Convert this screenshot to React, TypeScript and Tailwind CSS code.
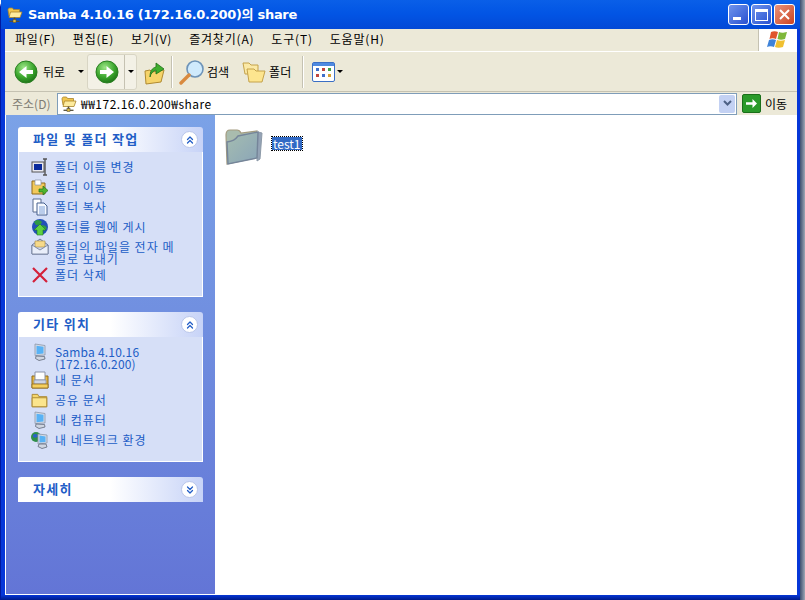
import React from 'react';
import { ChevronsUp, ChevronsDown } from 'lucide-react';

const kr = '"Noto Sans CJK KR", "Liberation Sans", sans-serif';

const FolderIcon = ({ size = 16 }: { size?: number }) => (
  <svg width={size} height={size} viewBox="0 0 16 16" className="shrink-0">
    <path d="M1 3h5l1 2h7v9H1z" fill="#f5d76e" stroke="#a8842c" strokeWidth="0.8" />
    <path d="M1 6h13v8H1z" fill="#fbe58d" stroke="#a8842c" strokeWidth="0.8" />
  </svg>
);

const SambaIcon = ({ size = 16 }: { size?: number }) => (
  <svg width={size} height={size} viewBox="0 0 16 16" className="shrink-0">
    <path d="M1 3c0-1 .5-2 1.500-2h3l1 1.500h6V9H2z" fill="#f0c64e" stroke="#a8842c" strokeWidth="0.8" />
    <path d="M3.500 5H15l-2 5.500H2z" fill="#fdeb9e" stroke="#a8842c" strokeWidth="0.8" />
    <path d="M7.500 10.500V13" stroke="#55503a" strokeWidth="1.600" />
    <path d="M2.500 14.300h10" stroke="#55503a" strokeWidth="1.300" />
    <rect x="6" y="12.500" width="3" height="3" fill="#e0b93c" stroke="#55503a" strokeWidth="0.6" />
  </svg>
);

const ComputerIcon = () => (
  <svg width="18" height="18" viewBox="0 0 18 18" className="shrink-0">
    <path d="M4 1l10 1.500v9.500L4 12.500z" fill="#d5dbe6" stroke="#8a95a8" strokeWidth="0.8" />
    <path d="M5.500 2.800l7 1v6.700l-7 .7z" fill="#58b2f5" />
    <path d="M5 13l-.5 2.500L8 17.500l6-1.500-.5-2.500z" fill="#cfd6e2" stroke="#5f6878" strokeWidth="0.8" />
  </svg>
);

const NetworkIcon = () => (
  <svg width="18" height="18" viewBox="0 0 18 18" className="shrink-0">
    <circle cx="5" cy="6" r="5" fill="#2f8f4a" />
    <path d="M2 4c2-2 4-1 5 1-1 2-3 2-5 1z" fill="#2a62c9" />
    <path d="M7 3l9 1v8l-9 1z" fill="#d5dbe6" stroke="#8a95a8" strokeWidth="0.8" />
    <path d="M8.500 4.600l6 .8v5.500l-6 .7z" fill="#58b2f5" />
    <path d="M8 13l-1 2.500 4 2 5-1.500-1-3z" fill="#cfd6e2" stroke="#5f6878" strokeWidth="0.8" />
  </svg>
);

const DocsIcon = () => (
  <svg width="18" height="18" viewBox="0 0 18 18" className="shrink-0">
    <path d="M1 5h16v12H1z" fill="#e9b93f" stroke="#8f6b1c" />
    <path d="M4 1h10v8H4z" fill="#fff" stroke="#8b93a8" />
    <path d="M3 9h12v4H3z" fill="#cdd5e6" stroke="#8b93a8" strokeWidth="0.8" />
    <path d="M1 13h16v4H1z" fill="#f5cf5e" stroke="#8f6b1c" strokeWidth="0.8" />
  </svg>
);

const RenameIcon = () => (
  <svg width="18" height="18" viewBox="0 0 18 18" className="shrink-0">
    <rect x="1" y="4" width="12" height="10" fill="#e8e8f0" stroke="#555" />
    <rect x="3" y="6" width="8" height="6" fill="#0a2a9c" />
    <path d="M14 1v16M12 1h4M12 17h4" stroke="#555" strokeWidth="1.400" />
  </svg>
);

const MoveIcon = () => (
  <svg width="18" height="18" viewBox="0 0 18 18" className="shrink-0">
    <path d="M1 3h6l1 2h6v11H1z" fill="#f2c95a" stroke="#8f6b1c" />
    <path d="M4 2h6v5H4z" fill="#fff" stroke="#8b93a8" strokeWidth="0.7" />
    <path d="M8 11h4V8l5 4.500-5 4.500V14H8z" fill="#4fb52e" stroke="#26701a" strokeWidth="0.7" />
  </svg>
);

const CopyIcon = () => (
  <svg width="18" height="18" viewBox="0 0 18 18" className="shrink-0">
    <path d="M2 1h8v13H2z" fill="#fff" stroke="#5a6d8f" />
    <path d="M6 5h7l3 3v9H6z" fill="#f6f9ff" stroke="#46608f" />
    <path d="M8 9h6M8 11h6M8 13h6M8 15h6" stroke="#7fa0d6" />
  </svg>
);

const WebIcon = () => (
  <svg width="18" height="18" viewBox="0 0 18 18" className="shrink-0">
    <circle cx="9" cy="9" r="8" fill="#2350b8" />
    <path d="M3 4c3-3 6-2 8 0-1 3-4 3-6 3zM11 7c2 0 4 1 5 3l-3 3z" fill="#2f9a45" />
    <path d="M9 6l6 6h-3v5H6v-5H3z" fill="#5fd040" stroke="#1e7a22" strokeWidth="0.6" />
  </svg>
);

const MailIcon = () => (
  <svg width="18" height="18" viewBox="0 0 18 18" className="shrink-0">
    <path d="M1 7l8-6 8 6v9H1z" fill="#cdd6ea" stroke="#6d7896" />
    <path d="M4 3h10v6H4z" fill="#f6d98a" stroke="#a58a45" strokeWidth="0.6" />
    <path d="M1 7l8 5 8-5v9H1z" fill="#e9eefa" stroke="#6d7896" strokeWidth="0.8" />
  </svg>
);

const DeleteIcon = () => (
  <svg width="18" height="18" viewBox="0 0 18 18" className="shrink-0">
    <path d="M2 2l14 14M16 2L2 16" stroke="#d4213a" strokeWidth="2.200" />
  </svg>
);

const RoundArrow = ({ dir }: { dir: 'left' | 'right' }) => (
  <svg width="24" height="24" viewBox="0 0 24 24" className="shrink-0">
    <defs>
      <radialGradient id={`g-${dir}`} cx="40%" cy="30%" r="75%">
        <stop offset="0%" stopColor="#9be585" />
        <stop offset="60%" stopColor="#3aa52c" />
        <stop offset="100%" stopColor="#1b6f16" />
      </radialGradient>
    </defs>
    <circle cx="12" cy="12" r="11" fill={`url(#g-${dir})`} stroke="#2a7f22" />
    <path
      d={dir === 'left' ? 'M19 10h-6.500V6L5 12l7.500 6v-4H19z' : 'M5 10h6.500V6L19 12l-7.500 6v-4H5z'}
      fill="#fff"
    />
  </svg>
);

const UpIcon = () => (
  <svg width="22" height="26" viewBox="0 0 22 26" className="shrink-0">
    <path d="M1 12l5-1 2 2 12-2-3 12-15 2z" fill="#f6d46a" stroke="#b08a30" />
    <path d="M6 18c0-6 2-9 6-10V4l8 6-8 5v-4c-3 1-5 3-6 7z" fill="#3fae2e" stroke="#1f6f18" strokeWidth="0.8" />
  </svg>
);

const SearchIcon = () => (
  <svg width="26" height="26" viewBox="0 0 26 26" className="shrink-0">
    <circle cx="16" cy="10" r="8" fill="#cfeafc" stroke="#6d93b8" strokeWidth="1.600" />
    <path d="M10 16L2 24" stroke="#d98a3f" strokeWidth="3.400" strokeLinecap="round" />
  </svg>
);

const FoldersIcon = () => (
  <svg width="24" height="22" viewBox="0 0 24 22" className="shrink-0">
    <path d="M1 2h6l2 2h7v9H3z" fill="#fbe9a6" stroke="#c4a24a" />
    <path d="M5 8h7l2 2h9l-3 11H7z" fill="#fde58f" stroke="#c4a24a" />
  </svg>
);

const ViewsIcon = () => (
  <svg width="23" height="20" viewBox="0 0 23 20" className="shrink-0">
    <rect x="0.500" y="0.500" width="22" height="19" rx="1.500" fill="#fff" stroke="#3b6fc4" />
    <rect x="1" y="1" width="21" height="3" fill="#4f8ae0" />
    <path d="M4 6h3v3H4z" fill="#3f6fc9" />
    <path d="M10 6h3v3h-3z" fill="#c0453c" />
    <path d="M16 6h3v3h-3z" fill="#3fa045" />
    <path d="M4 12h3v3H4z" fill="#c0453c" />
    <path d="M10 12h3v3h-3z" fill="#3f6fc9" />
    <path d="M16 12h3v3h-3z" fill="#d8a030" />
  </svg>
);

const XpFlag = () => (
  <svg width="22" height="20" viewBox="0 0 22 20">
    <path d="M4 2c2-1 5-1 7 0L9 9C7 8 4 8 2.500 9z" fill="#e0552d" />
    <path d="M12 2c2 1 4 1 8 0l-2 7c-3 1-5 1-7.500 0z" fill="#7fb83a" />
    <path d="M2 10c2-1 5-1 7 0l-2 7c-2-1-5-1-7 0z" fill="#3f83d9" />
    <path d="M10 10c2 1 5 1 8 0l-2 7c-3 1-6 1-8 0z" fill="#f0c030" />
  </svg>
);

const Caret = () => (
  <span className="block w-0 h-0 border-x-[3px] border-x-transparent border-t-[3px] border-t-black" />
);

const Divider = () => <div className="w-px h-[32px] bg-[#c5c2b2] border-r border-white mx-[2px] box-content" />;

type TaskItem = { icon: React.ReactNode; label: React.ReactNode };

const fileTasks: TaskItem[] = [
  { icon: <RenameIcon />, label: '폴더 이름 변경' },
  { icon: <MoveIcon />, label: '폴더 이동' },
  { icon: <CopyIcon />, label: '폴더 복사' },
  { icon: <WebIcon />, label: '폴더를 웹에 게시' },
  { icon: <MailIcon />, label: <>폴더의 파일을 전자 메<br />일로 보내기</> },
  { icon: <DeleteIcon />, label: '폴더 삭제' },
];

const otherPlaces: TaskItem[] = [
  { icon: <ComputerIcon />, label: <span className="tracking-[0.2px]">Samba 4.10.16<br />(172.16.0.200)</span> },
  { icon: <DocsIcon />, label: '내 문서' },
  { icon: <FolderIcon size={18} />, label: '공유 문서' },
  { icon: <ComputerIcon />, label: '내 컴퓨터' },
  { icon: <NetworkIcon />, label: '내 네트워크 환경' },
];

const Panel = ({ title, items, collapsed }: { title: string; items?: TaskItem[]; collapsed?: boolean }) => (
  <div className="w-[185px]">
    <div className="h-[25px] rounded-t-[3px] bg-gradient-to-r from-white via-white to-[#c7d3f7] flex items-center justify-between pl-[15px] pr-[5px]">
      <span className="text-[13px] leading-[13px] pb-[2px] font-bold text-[#215dc6] tracking-[1.300px]">{title}</span>
      <span className="w-[17px] h-[17px] rounded-full bg-white border border-[#b9c6ea] flex items-center justify-center text-[#215dc6]">
        {collapsed ? <ChevronsDown size={12} strokeWidth={2.500} /> : <ChevronsUp size={12} strokeWidth={2.500} />}
      </span>
    </div>
    {items && (
      <div className="bg-[#d6dff7] border border-t-0 border-white pl-[12px] pr-[10px] pt-[5px] pb-[11px]">
        {items.map((item, i) => (
          <div key={i} className="flex items-start gap-[6px] min-h-[20px] pt-[1px]">
            <div className="w-[18px] flex justify-center">{item.icon}</div>
            <div className="text-[12px] leading-[12px] text-[#215dc6] pt-[3px] tracking-[1px] whitespace-nowrap">{item.label}</div>
          </div>
        ))}
      </div>
    )}
  </div>
);

const App: React.FC = () => {
  return (
    <div className="w-[805px] h-[600px] overflow-hidden flex bg-white" style={{ fontFamily: kr }}>
      <div className="w-[800px] h-full flex flex-col bg-[#0637d8] rounded-t-[7px] border-l border-[#0018a0]">
        <div className="h-[29px] shrink-0 bg-gradient-to-b from-[#0a5fe8] via-[#0254e4] to-[#0349d6] flex items-center pl-[6px] pr-[5px]">
          <SambaIcon />
          <span
            className="ml-[5px] pt-[1px] text-[13px] font-bold text-white whitespace-nowrap tracking-[-0.300px]"
            style={{ fontFamily: '"DejaVu Sans", "Noto Sans CJK KR", sans-serif' }}
          >
            Samba 4.10.16 (172.16.0.200)의 share
          </span>
          <div className="ml-auto flex gap-[2px]">
            <button className="w-[21px] h-[21px] rounded-[3px] border border-white bg-gradient-to-br from-[#6f93ec] to-[#2a50d0] flex items-end pl-[4px] pb-[4px]">
              <span className="w-[8px] h-[3px] bg-white" />
            </button>
            <button className="w-[21px] h-[21px] rounded-[3px] border border-white bg-gradient-to-br from-[#6f93ec] to-[#2a50d0] flex items-center justify-center">
              <span className="w-[13px] h-[12px] border border-white border-t-[3px]" />
            </button>
            <button className="w-[21px] h-[21px] rounded-[3px] border border-white bg-gradient-to-br from-[#e9927a] to-[#c9401c] flex items-center justify-center">
              <svg width="11" height="11" viewBox="0 0 11 11"><path d="M1 1l9 9M10 1l-9 9" stroke="#fff" strokeWidth="2" /></svg>
            </button>
          </div>
        </div>

        <div className="flex-1 min-h-0 ml-[4px] mr-[3px] flex flex-col bg-[#ece9d8]">
          <div className="h-[23px] shrink-0 flex items-stretch border-b border-white">
            <div className="flex-1 flex items-center gap-[17px] pl-[10px] pb-[2px] text-[12px] text-black tracking-[0.800px] border-r border-[#c5c2b2]">
              <span>파일(F)</span>
              <span>편집(E)</span>
              <span>보기(V)</span>
              <span>즐겨찾기(A)</span>
              <span>도구(T)</span>
              <span>도움말(H)</span>
            </div>
            <div className="w-[38px] bg-white flex items-center justify-center"><XpFlag /></div>
          </div>

          <div className="h-[40px] shrink-0 flex items-center pl-[9px] border-b border-[#c5c2b2] text-[12px]">
            <div className="flex items-center gap-[5px] w-[72px]">
              <RoundArrow dir="left" />
              <span>뒤로</span>
              <span className="ml-[8px]"><Caret /></span>
            </div>
            <div className="h-[36px] w-[50px] ml-[1px] rounded-[3px] bg-[#f3f1e6] border border-[#d8d5c4] flex items-center">
              <div className="w-[37px] pl-[7px] border-r border-[#c5c2b2] h-full flex items-center"><RoundArrow dir="right" /></div>
              <div className="flex-1 flex justify-center"><Caret /></div>
            </div>
            <div className="ml-[7px] mr-[3px]"><UpIcon /></div>
            <Divider />
            <div className="flex items-center gap-[2px] ml-[4px]">
              <SearchIcon />
              <span>검색</span>
            </div>
            <div className="flex items-center gap-[3px] ml-[13px] mr-[9px]">
              <FoldersIcon />
              <span>폴더</span>
            </div>
            <Divider />
            <div className="flex items-center gap-[2px] ml-[6px]">
              <ViewsIcon />
              <Caret />
            </div>
          </div>

          <div className="h-[23px] shrink-0 flex items-center text-[12px]">
            <span className="w-[52px] pl-[7px] text-[#7f7c73]">주소(D)</span>
            <div className="w-[680px] h-[22px] bg-white border border-[#7f9db9] flex items-center pl-[3px] pr-[1px]">
              <SambaIcon />
              <span className="ml-[4px] tracking-[0.500px]">₩₩172.16.0.200₩share</span>
              <span className="ml-auto w-[16px] h-[18px] rounded-[2px] bg-[#c3d1f3] flex items-center justify-center text-[#4d6185]">
                <svg width="9" height="7" viewBox="0 0 9 7"><path d="M1 1l3.500 3.500L8 1" fill="none" stroke="currentColor" strokeWidth="2" /></svg>
              </span>
            </div>
            <span className="ml-[5px] w-[19px] h-[19px] rounded-[2px] bg-[#2a9a2a] border border-[#1a6f1a] flex items-center justify-center">
              <svg width="13" height="11" viewBox="0 0 13 11"><path d="M1 4.200h6.500V1L12 5.500 7.500 10V6.800H1z" fill="#fff" /></svg>
            </span>
            <span className="ml-[4px]">이동</span>
          </div>

          <div className="flex-1 min-h-0 flex border-l border-b border-white bg-white">
            <div className="w-[209px] shrink-0 bg-gradient-to-b from-[#7ba2e7] to-[#6375d6] pt-[12px] pl-[12px] flex flex-col gap-[15px]">
              <Panel title="파일 및 폴더 작업" items={fileTasks} />
              <Panel title="기타 위치" items={otherPlaces} />
              <Panel title="자세히" collapsed />
            </div>
            <div className="flex-1 bg-white pl-[10px] pt-[12px] flex items-start">
              <svg width="38" height="39" viewBox="0 0 38 39" className="shrink-0">
                <defs>
                  <linearGradient id="dim-folder" x1="0" y1="0" x2="1" y2="1">
                    <stop offset="0%" stopColor="#a5bdb0" />
                    <stop offset="100%" stopColor="#8aa5b8" />
                  </linearGradient>
                </defs>
                <path d="M33 5l4 1-2 26-3 2z" fill="#94a3b6" stroke="#8d9aa8" />
                <path d="M2 37L1 8c0-3 1-5 4-5l7 0c2 0 3 1 4 3l16-2-1 27z" fill="#a9bcae" stroke="#a49c80" strokeWidth="1.200" />
                <path d="M3 37L2 15c6-1 8-2 11-6l20-4-1 26z" fill="url(#dim-folder)" stroke="#75859a" strokeWidth="1.400" />
              </svg>
              <span className="ml-[9px] mt-[10px] px-[1px] text-[12px] leading-[13px] text-white bg-[#316ac5] outline-1 outline-dotted outline-black">test1</span>
            </div>
          </div>
        </div>
        <div className="h-[5px] shrink-0 bg-gradient-to-b from-[#0637d8] to-[#001a8a]" />
      </div>
      <div className="flex-1 h-full bg-gradient-to-r from-[#3f4f70] to-[#a0a8b5]" />
    </div>
  );
};

export default App;
